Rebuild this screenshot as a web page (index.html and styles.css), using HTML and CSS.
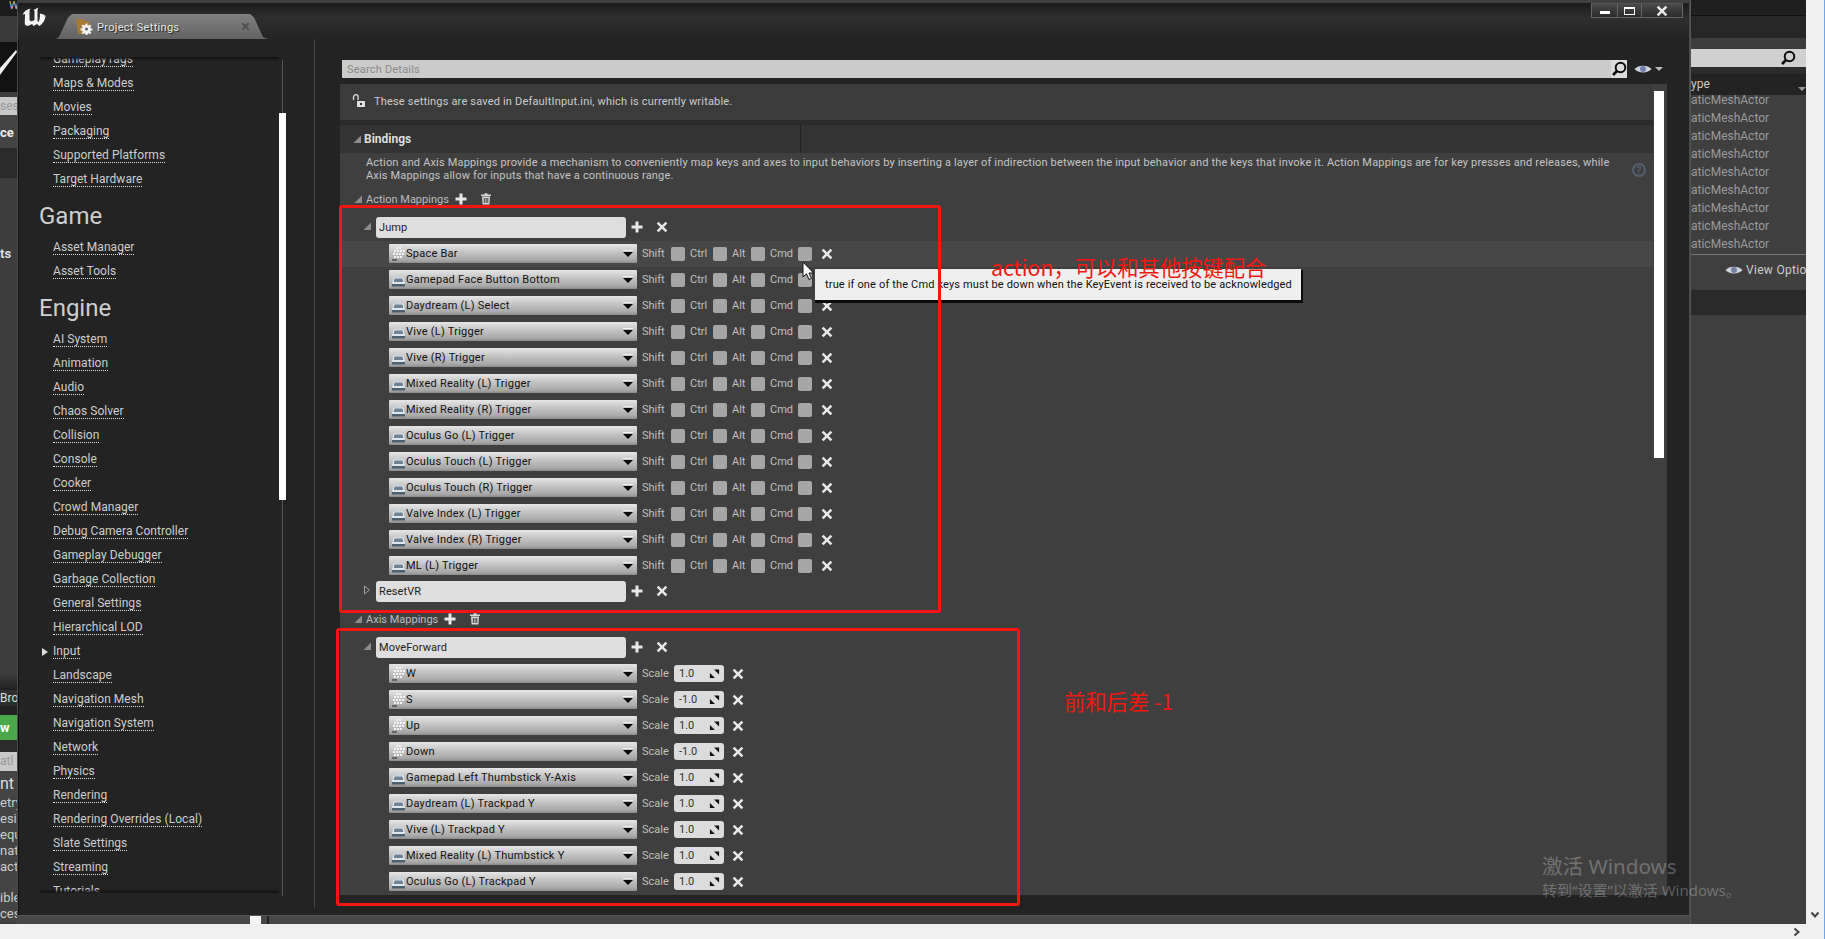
FILE: index.html
```html
<!DOCTYPE html>
<html lang="en">
<head>
<meta charset="utf-8">
<title>Project Settings</title>
<link rel="stylesheet" href="styles.css">
</head>
<body>
<svg class="sprite" width="0" height="0" aria-hidden="true">
  <defs>
    <symbol id="i-plus" viewBox="0 0 12 12"><path d="M4.500 0.500h3v4h4v3h-4v4h-3v-4h-4v-3h4z" fill="#e8e8e8"/></symbol>
    <symbol id="i-x" viewBox="0 0 12 12"><path d="M2.500 0.800L6 4.200 9.500 0.800 11.300 2.500 7.800 6l3.500 3.500-1.800 1.700L6 7.800 2.500 11.200 0.700 9.500 4.200 6 0.700 2.500z" fill="#e8e8e8"/></symbol>
    <symbol id="i-trash" viewBox="0 0 12 12"><path d="M1 1.500h10v1.500H1zM4.500 0.200h3v1.300h-3zM2 3.500h8l-.6 8H2.600zM3.800 5v5h1V5zM5.600 5v5h1V5zM7.300 5v5h1V5z" fill="#d8d8d8" fill-rule="evenodd"/></symbol>
    <symbol id="i-open" viewBox="0 0 10 10"><path d="M9 1.500V9H1.500z" fill="#8c8c8c"/></symbol>
    <symbol id="i-closed" viewBox="0 0 10 10"><path d="M2.500 1L7.500 5 2.500 9z" fill="none" stroke="#a0a0a0"/></symbol>
    <symbol id="i-kb" viewBox="0 0 15 16">
      <path d="M5 1h2v2H5zM8 1h2v2H8zM3 4h2v2H3zM6 4h2v2H6zM9 4h2v2H9zM12 4h2v2h-2zM2 7h2v2H2zM5 7h2v2H5zM8 7h2v2H8zM11 7h2v2h-2zM3 10h2v2H3zM6 10h2v2H6zM9 10h2v2H9z" fill="#f4f4f4"/>
      <path d="M1 13h5v2H1z" fill="#666"/>
    </symbol>
    <symbol id="i-pad" viewBox="0 0 15 16">
      <path d="M2.500 5.500h10L14 12H1z" fill="#dfe7ee"/>
      <path d="M3.500 6.500h8l.8 3.500H2.700z" fill="#6f8294"/>
      <path d="M1 12h13v2.500H1z" fill="#4c6070"/>
      <path d="M5 3.500h5v2H5z" fill="#c8d2da"/>
    </symbol>
    <symbol id="i-caret" viewBox="0 0 12 8"><path d="M1 0.500h10" stroke="#eee"/><path d="M1 2h10L6 7z" fill="#0a0a0a"/></symbol>
    <symbol id="i-spin" viewBox="0 0 12 12"><path d="M5.500 1.500H11V7zM1 5.500L6.500 11H1z" fill="#111"/></symbol>
    <symbol id="i-lens" viewBox="0 0 16 16"><circle cx="9.500" cy="6.500" r="4.800" fill="none" stroke="#0c0c0c" stroke-width="2"/><path d="M6 10L2 14" stroke="#0c0c0c" stroke-width="2.600"/></symbol>
    <symbol id="i-eye" viewBox="0 0 18 10"><path d="M0.500 5C4 0.500 14 0.500 17.500 5 14 9.500 4 9.500 0.500 5z" fill="#d0d4dc"/><circle cx="9" cy="5" r="3" fill="#7480a8"/></symbol>
  </defs>
</svg>

<div class="page">
  <div class="desktop">

    <aside class="strip-left">
      <div class="sl sl-w">W</div>
      <div class="sl sl-a"></div>
      <div class="sl sl-view">
        <svg class="sl-sweep" width="17" height="50" viewBox="0 0 17 50"><path d="M0 33L17 10 16 8 0 26z" fill="#f0f0f0"/></svg>
      </div>
      <div class="sl sl-b"></div>
      <div class="sl sl-search">ses</div>
      <div class="sl sl-ce">ce</div>
      <div class="sl sl-d"></div>
      <div class="sl sl-ts">ts</div>
      <div class="sl sl-e"></div>
      <div class="sl sl-f"></div>
      <div class="sl sl-bro">Bro</div>
      <div class="sl sl-g"></div>
      <div class="sl sl-green">w</div>
      <div class="sl sl-h"></div>
      <div class="sl sl-search2">atl</div>
      <div class="sl sl-nt">nt</div>
      <div class="sl sl-t">etry</div>
      <div class="sl sl-t">esid</div>
      <div class="sl sl-t">equ</div>
      <div class="sl sl-t">nati</div>
      <div class="sl sl-t">act</div>
      <div class="sl sl-gap"></div>
      <div class="sl sl-t">ible</div>
      <div class="sl sl-t">cess</div>
    </aside>

    <section class="window">
      <header class="titlebar">
        <svg class="ue-logo" width="24" height="20" viewBox="0 0 24 20"><path d="M0.500 8C1.500 4.500 4.500 2.500 8.500 1.500L7.500 3.500V12C7.500 14 9 14.500 10.500 14L12.500 13V4L11.500 3 16.500 0.500 15.500 3V14L16.500 15C17.500 13 18 11 18 8L17.800 6.500C21 7 23.500 8 23.500 9.500 23 13 21 16.500 17.500 19L15 17 11.500 19 10 17C7 19 4 19.500 3 17.500 2.500 16 3 12 3 8 3 6.500 2 6.500 0.500 8z" fill="#f4f4f4"/></svg>
        <div class="tab">
          <svg class="tab-icon" width="17" height="16" viewBox="0 0 17 16">
            <path d="M0 0h7l1 2h5l1 6-6 7H2z" fill="#a87a38"/>
            <path d="M9.500 4.500h2v1.600l1.300.5 1.200-1.100 1.400 1.400-1.100 1.200.5 1.300h1.600v2h-1.600l-.5 1.300 1.100 1.200-1.400 1.400-1.200-1.100-1.300.5v1.600h-2v-1.600l-1.300-.5-1.200 1.100-1.400-1.400 1.100-1.200-.5-1.300H4.500v-2h1.600l.5-1.300-1.100-1.200 1.400-1.400 1.200 1.100 1.300-.5z" fill="#f2f2f2"/>
            <circle cx="10.500" cy="10" r="1.500" fill="#666"/>
          </svg>
          <span class="tab-label">Project Settings</span>
          <span class="tab-close">×</span>
        </div>
        <div class="winbtns">
          <div class="winbtn winbtn-min"><span class="glyph-min"></span></div>
          <div class="winbtn winbtn-max"><span class="glyph-max"></span></div>
          <div class="winbtn winbtn-close"><svg width="12" height="12"><use href="#i-x"/></svg></div>
        </div>
      </header>

      <div class="winbody">
        <nav class="sidebar">
          <div class="nav-clip">
            <div class="nav-list">
              <div class="nav-item"><span>GameplayTags</span></div>
              <div class="nav-item"><span>Maps &amp; Modes</span></div>
              <div class="nav-item"><span>Movies</span></div>
              <div class="nav-item"><span>Packaging</span></div>
              <div class="nav-item"><span>Supported Platforms</span></div>
              <div class="nav-item"><span>Target Hardware</span></div>
              <h2 class="nav-head">Game</h2>
              <div class="nav-item"><span>Asset Manager</span></div>
              <div class="nav-item"><span>Asset Tools</span></div>
              <h2 class="nav-head">Engine</h2>
              <div class="nav-item"><span>AI System</span></div>
              <div class="nav-item"><span>Animation</span></div>
              <div class="nav-item"><span>Audio</span></div>
              <div class="nav-item"><span>Chaos Solver</span></div>
              <div class="nav-item"><span>Collision</span></div>
              <div class="nav-item"><span>Console</span></div>
              <div class="nav-item"><span>Cooker</span></div>
              <div class="nav-item"><span>Crowd Manager</span></div>
              <div class="nav-item"><span>Debug Camera Controller</span></div>
              <div class="nav-item"><span>Gameplay Debugger</span></div>
              <div class="nav-item"><span>Garbage Collection</span></div>
              <div class="nav-item"><span>General Settings</span></div>
              <div class="nav-item"><span>Hierarchical LOD</span></div>
              <div class="nav-item nav-current"><span>Input</span></div>
              <div class="nav-item"><span>Landscape</span></div>
              <div class="nav-item"><span>Navigation Mesh</span></div>
              <div class="nav-item"><span>Navigation System</span></div>
              <div class="nav-item"><span>Network</span></div>
              <div class="nav-item"><span>Physics</span></div>
              <div class="nav-item"><span>Rendering</span></div>
              <div class="nav-item"><span>Rendering Overrides (Local)</span></div>
              <div class="nav-item"><span>Slate Settings</span></div>
              <div class="nav-item"><span>Streaming</span></div>
              <div class="nav-item"><span>Tutorials</span></div>
            </div>
          </div>
          <div class="nav-scroll"><div class="nav-thumb"></div></div>
        </nav>

        <main class="details">
          <div class="searchrow">
            <div class="search"><span class="search-text">Search Details</span><span class="search-btn"><svg width="16" height="16"><use href="#i-lens"/></svg></span></div>
            <svg class="eye" width="18" height="10"><use href="#i-eye"/></svg>
            <span class="eye-caret"></span>
          </div>

          <div class="detail-wrap">
            <div class="panel">
              <div class="info">
                <svg class="lock" width="14" height="14" viewBox="0 0 14 14"><path d="M1.500 6V3a2.300 2.300 0 0 1 4.600 0v3" fill="none" stroke="#ddd" stroke-width="1.300"/><path d="M5 7h8v6H5z" fill="#ddd"/><path d="M8 9h2v2H8z" fill="#333"/></svg>
                <span>These settings are saved in DefaultInput.ini, which is currently writable.</span>
              </div>

              <div class="cat">
                <svg class="arrow" width="10" height="10"><use href="#i-open"/></svg>
                <span class="cat-name">Bindings</span>
                <span class="cat-split"></span>
              </div>

              <div class="desc">
                <p>Action and Axis Mappings provide a mechanism to conveniently map keys and axes to input behaviors by inserting a layer of indirection between the input behavior and the keys that invoke it. Action Mappings are for key presses and releases, while<br>Axis Mappings allow for inputs that have a continuous range.</p>
                <span class="help">?</span>
              </div>

              <div class="sec">
                <svg class="arrow" width="10" height="10"><use href="#i-open"/></svg>
                <span class="sec-name">Action Mappings</span>
                <svg class="sec-add" width="12" height="12"><use href="#i-plus"/></svg>
                <svg class="sec-del" width="12" height="12"><use href="#i-trash"/></svg>
              </div>

              <div class="group">
                <svg class="arrow group-arrow" width="10" height="10"><use href="#i-open"/></svg>
                <div class="name">Jump</div>
                <svg class="act act-add" width="12" height="12"><use href="#i-plus"/></svg>
                <svg class="act act-x" width="12" height="12"><use href="#i-x"/></svg>
              </div>

              <div class="row row-hover">
                <div class="sel"><svg class="ki" width="15" height="16"><use href="#i-kb"/></svg><span class="sel-text">Space Bar</span><svg class="caret" width="12" height="8"><use href="#i-caret"/></svg></div>
                <div class="mod mod-shift"><span>Shift</span><i class="box"></i></div><div class="mod mod-ctrl"><span>Ctrl</span><i class="box"></i></div><div class="mod mod-alt"><span>Alt</span><i class="box"></i></div><div class="mod mod-cmd"><span>Cmd</span><i class="box"></i></div>
                <svg class="del del-a" width="12" height="12"><use href="#i-x"/></svg>
              </div>
              <div class="row">
                <div class="sel"><svg class="ki" width="15" height="16"><use href="#i-pad"/></svg><span class="sel-text">Gamepad Face Button Bottom</span><svg class="caret" width="12" height="8"><use href="#i-caret"/></svg></div>
                <div class="mod mod-shift"><span>Shift</span><i class="box"></i></div><div class="mod mod-ctrl"><span>Ctrl</span><i class="box"></i></div><div class="mod mod-alt"><span>Alt</span><i class="box"></i></div><div class="mod mod-cmd"><span>Cmd</span><i class="box"></i></div>
                <svg class="del del-a" width="12" height="12"><use href="#i-x"/></svg>
              </div>
              <div class="row">
                <div class="sel"><svg class="ki" width="15" height="16"><use href="#i-pad"/></svg><span class="sel-text">Daydream (L) Select</span><svg class="caret" width="12" height="8"><use href="#i-caret"/></svg></div>
                <div class="mod mod-shift"><span>Shift</span><i class="box"></i></div><div class="mod mod-ctrl"><span>Ctrl</span><i class="box"></i></div><div class="mod mod-alt"><span>Alt</span><i class="box"></i></div><div class="mod mod-cmd"><span>Cmd</span><i class="box"></i></div>
                <svg class="del del-a" width="12" height="12"><use href="#i-x"/></svg>
              </div>
              <div class="row">
                <div class="sel"><svg class="ki" width="15" height="16"><use href="#i-pad"/></svg><span class="sel-text">Vive (L) Trigger</span><svg class="caret" width="12" height="8"><use href="#i-caret"/></svg></div>
                <div class="mod mod-shift"><span>Shift</span><i class="box"></i></div><div class="mod mod-ctrl"><span>Ctrl</span><i class="box"></i></div><div class="mod mod-alt"><span>Alt</span><i class="box"></i></div><div class="mod mod-cmd"><span>Cmd</span><i class="box"></i></div>
                <svg class="del del-a" width="12" height="12"><use href="#i-x"/></svg>
              </div>
              <div class="row">
                <div class="sel"><svg class="ki" width="15" height="16"><use href="#i-pad"/></svg><span class="sel-text">Vive (R) Trigger</span><svg class="caret" width="12" height="8"><use href="#i-caret"/></svg></div>
                <div class="mod mod-shift"><span>Shift</span><i class="box"></i></div><div class="mod mod-ctrl"><span>Ctrl</span><i class="box"></i></div><div class="mod mod-alt"><span>Alt</span><i class="box"></i></div><div class="mod mod-cmd"><span>Cmd</span><i class="box"></i></div>
                <svg class="del del-a" width="12" height="12"><use href="#i-x"/></svg>
              </div>
              <div class="row">
                <div class="sel"><svg class="ki" width="15" height="16"><use href="#i-pad"/></svg><span class="sel-text">Mixed Reality (L) Trigger</span><svg class="caret" width="12" height="8"><use href="#i-caret"/></svg></div>
                <div class="mod mod-shift"><span>Shift</span><i class="box"></i></div><div class="mod mod-ctrl"><span>Ctrl</span><i class="box"></i></div><div class="mod mod-alt"><span>Alt</span><i class="box"></i></div><div class="mod mod-cmd"><span>Cmd</span><i class="box"></i></div>
                <svg class="del del-a" width="12" height="12"><use href="#i-x"/></svg>
              </div>
              <div class="row">
                <div class="sel"><svg class="ki" width="15" height="16"><use href="#i-pad"/></svg><span class="sel-text">Mixed Reality (R) Trigger</span><svg class="caret" width="12" height="8"><use href="#i-caret"/></svg></div>
                <div class="mod mod-shift"><span>Shift</span><i class="box"></i></div><div class="mod mod-ctrl"><span>Ctrl</span><i class="box"></i></div><div class="mod mod-alt"><span>Alt</span><i class="box"></i></div><div class="mod mod-cmd"><span>Cmd</span><i class="box"></i></div>
                <svg class="del del-a" width="12" height="12"><use href="#i-x"/></svg>
              </div>
              <div class="row">
                <div class="sel"><svg class="ki" width="15" height="16"><use href="#i-pad"/></svg><span class="sel-text">Oculus Go (L) Trigger</span><svg class="caret" width="12" height="8"><use href="#i-caret"/></svg></div>
                <div class="mod mod-shift"><span>Shift</span><i class="box"></i></div><div class="mod mod-ctrl"><span>Ctrl</span><i class="box"></i></div><div class="mod mod-alt"><span>Alt</span><i class="box"></i></div><div class="mod mod-cmd"><span>Cmd</span><i class="box"></i></div>
                <svg class="del del-a" width="12" height="12"><use href="#i-x"/></svg>
              </div>
              <div class="row">
                <div class="sel"><svg class="ki" width="15" height="16"><use href="#i-pad"/></svg><span class="sel-text">Oculus Touch (L) Trigger</span><svg class="caret" width="12" height="8"><use href="#i-caret"/></svg></div>
                <div class="mod mod-shift"><span>Shift</span><i class="box"></i></div><div class="mod mod-ctrl"><span>Ctrl</span><i class="box"></i></div><div class="mod mod-alt"><span>Alt</span><i class="box"></i></div><div class="mod mod-cmd"><span>Cmd</span><i class="box"></i></div>
                <svg class="del del-a" width="12" height="12"><use href="#i-x"/></svg>
              </div>
              <div class="row">
                <div class="sel"><svg class="ki" width="15" height="16"><use href="#i-pad"/></svg><span class="sel-text">Oculus Touch (R) Trigger</span><svg class="caret" width="12" height="8"><use href="#i-caret"/></svg></div>
                <div class="mod mod-shift"><span>Shift</span><i class="box"></i></div><div class="mod mod-ctrl"><span>Ctrl</span><i class="box"></i></div><div class="mod mod-alt"><span>Alt</span><i class="box"></i></div><div class="mod mod-cmd"><span>Cmd</span><i class="box"></i></div>
                <svg class="del del-a" width="12" height="12"><use href="#i-x"/></svg>
              </div>
              <div class="row">
                <div class="sel"><svg class="ki" width="15" height="16"><use href="#i-pad"/></svg><span class="sel-text">Valve Index (L) Trigger</span><svg class="caret" width="12" height="8"><use href="#i-caret"/></svg></div>
                <div class="mod mod-shift"><span>Shift</span><i class="box"></i></div><div class="mod mod-ctrl"><span>Ctrl</span><i class="box"></i></div><div class="mod mod-alt"><span>Alt</span><i class="box"></i></div><div class="mod mod-cmd"><span>Cmd</span><i class="box"></i></div>
                <svg class="del del-a" width="12" height="12"><use href="#i-x"/></svg>
              </div>
              <div class="row">
                <div class="sel"><svg class="ki" width="15" height="16"><use href="#i-pad"/></svg><span class="sel-text">Valve Index (R) Trigger</span><svg class="caret" width="12" height="8"><use href="#i-caret"/></svg></div>
                <div class="mod mod-shift"><span>Shift</span><i class="box"></i></div><div class="mod mod-ctrl"><span>Ctrl</span><i class="box"></i></div><div class="mod mod-alt"><span>Alt</span><i class="box"></i></div><div class="mod mod-cmd"><span>Cmd</span><i class="box"></i></div>
                <svg class="del del-a" width="12" height="12"><use href="#i-x"/></svg>
              </div>
              <div class="row">
                <div class="sel"><svg class="ki" width="15" height="16"><use href="#i-pad"/></svg><span class="sel-text">ML (L) Trigger</span><svg class="caret" width="12" height="8"><use href="#i-caret"/></svg></div>
                <div class="mod mod-shift"><span>Shift</span><i class="box"></i></div><div class="mod mod-ctrl"><span>Ctrl</span><i class="box"></i></div><div class="mod mod-alt"><span>Alt</span><i class="box"></i></div><div class="mod mod-cmd"><span>Cmd</span><i class="box"></i></div>
                <svg class="del del-a" width="12" height="12"><use href="#i-x"/></svg>
              </div>

              <div class="group group-next">
                <svg class="arrow group-arrow" width="10" height="10"><use href="#i-closed"/></svg>
                <div class="name">ResetVR</div>
                <svg class="act act-add" width="12" height="12"><use href="#i-plus"/></svg>
                <svg class="act act-x" width="12" height="12"><use href="#i-x"/></svg>
              </div>

              <div class="sec sec-next">
                <svg class="arrow" width="10" height="10"><use href="#i-open"/></svg>
                <span class="sec-name">Axis Mappings</span>
                <svg class="sec-add" width="12" height="12"><use href="#i-plus"/></svg>
                <svg class="sec-del" width="12" height="12"><use href="#i-trash"/></svg>
              </div>

              <div class="group">
                <svg class="arrow group-arrow" width="10" height="10"><use href="#i-open"/></svg>
                <div class="name">MoveForward</div>
                <svg class="act act-add" width="12" height="12"><use href="#i-plus"/></svg>
                <svg class="act act-x" width="12" height="12"><use href="#i-x"/></svg>
              </div>

              <div class="row">
                <div class="sel"><svg class="ki" width="15" height="16"><use href="#i-kb"/></svg><span class="sel-text">W</span><svg class="caret" width="12" height="8"><use href="#i-caret"/></svg></div>
                <span class="scale-l">Scale</span><div class="scale"><span>1.0</span><svg width="11" height="11"><use href="#i-spin"/></svg></div>
                <svg class="del del-s" width="12" height="12"><use href="#i-x"/></svg>
              </div>
              <div class="row">
                <div class="sel"><svg class="ki" width="15" height="16"><use href="#i-kb"/></svg><span class="sel-text">S</span><svg class="caret" width="12" height="8"><use href="#i-caret"/></svg></div>
                <span class="scale-l">Scale</span><div class="scale"><span>-1.0</span><svg width="11" height="11"><use href="#i-spin"/></svg></div>
                <svg class="del del-s" width="12" height="12"><use href="#i-x"/></svg>
              </div>
              <div class="row">
                <div class="sel"><svg class="ki" width="15" height="16"><use href="#i-kb"/></svg><span class="sel-text">Up</span><svg class="caret" width="12" height="8"><use href="#i-caret"/></svg></div>
                <span class="scale-l">Scale</span><div class="scale"><span>1.0</span><svg width="11" height="11"><use href="#i-spin"/></svg></div>
                <svg class="del del-s" width="12" height="12"><use href="#i-x"/></svg>
              </div>
              <div class="row">
                <div class="sel"><svg class="ki" width="15" height="16"><use href="#i-kb"/></svg><span class="sel-text">Down</span><svg class="caret" width="12" height="8"><use href="#i-caret"/></svg></div>
                <span class="scale-l">Scale</span><div class="scale"><span>-1.0</span><svg width="11" height="11"><use href="#i-spin"/></svg></div>
                <svg class="del del-s" width="12" height="12"><use href="#i-x"/></svg>
              </div>
              <div class="row">
                <div class="sel"><svg class="ki" width="15" height="16"><use href="#i-pad"/></svg><span class="sel-text">Gamepad Left Thumbstick Y-Axis</span><svg class="caret" width="12" height="8"><use href="#i-caret"/></svg></div>
                <span class="scale-l">Scale</span><div class="scale"><span>1.0</span><svg width="11" height="11"><use href="#i-spin"/></svg></div>
                <svg class="del del-s" width="12" height="12"><use href="#i-x"/></svg>
              </div>
              <div class="row">
                <div class="sel"><svg class="ki" width="15" height="16"><use href="#i-pad"/></svg><span class="sel-text">Daydream (L) Trackpad Y</span><svg class="caret" width="12" height="8"><use href="#i-caret"/></svg></div>
                <span class="scale-l">Scale</span><div class="scale"><span>1.0</span><svg width="11" height="11"><use href="#i-spin"/></svg></div>
                <svg class="del del-s" width="12" height="12"><use href="#i-x"/></svg>
              </div>
              <div class="row">
                <div class="sel"><svg class="ki" width="15" height="16"><use href="#i-pad"/></svg><span class="sel-text">Vive (L) Trackpad Y</span><svg class="caret" width="12" height="8"><use href="#i-caret"/></svg></div>
                <span class="scale-l">Scale</span><div class="scale"><span>1.0</span><svg width="11" height="11"><use href="#i-spin"/></svg></div>
                <svg class="del del-s" width="12" height="12"><use href="#i-x"/></svg>
              </div>
              <div class="row">
                <div class="sel"><svg class="ki" width="15" height="16"><use href="#i-pad"/></svg><span class="sel-text">Mixed Reality (L) Thumbstick Y</span><svg class="caret" width="12" height="8"><use href="#i-caret"/></svg></div>
                <span class="scale-l">Scale</span><div class="scale"><span>1.0</span><svg width="11" height="11"><use href="#i-spin"/></svg></div>
                <svg class="del del-s" width="12" height="12"><use href="#i-x"/></svg>
              </div>
              <div class="row">
                <div class="sel"><svg class="ki" width="15" height="16"><use href="#i-pad"/></svg><span class="sel-text">Oculus Go (L) Trackpad Y</span><svg class="caret" width="12" height="8"><use href="#i-caret"/></svg></div>
                <span class="scale-l">Scale</span><div class="scale"><span>1.0</span><svg width="11" height="11"><use href="#i-spin"/></svg></div>
                <svg class="del del-s" width="12" height="12"><use href="#i-x"/></svg>
              </div>
            </div>
            <div class="detail-scroll"><div class="detail-thumb"></div></div>
          </div>
        </main>
      </div>
    </section>

    <aside class="strip-right">
      <div class="sr sr-top"></div>
      <div class="sr sr-mid"></div>
      <div class="sr sr-band"></div>
      <div class="sr sr-search"><svg width="16" height="16"><use href="#i-lens"/></svg></div>
      <div class="sr sr-gap"></div>
      <div class="sr sr-head"><span>ype</span><span class="sr-sort"></span></div>
      <div class="sr-rows">
        <div class="sr-row">aticMeshActor</div>
        <div class="sr-row">aticMeshActor</div>
        <div class="sr-row">aticMeshActor</div>
        <div class="sr-row">aticMeshActor</div>
        <div class="sr-row">aticMeshActor</div>
        <div class="sr-row">aticMeshActor</div>
        <div class="sr-row">aticMeshActor</div>
        <div class="sr-row">aticMeshActor</div>
        <div class="sr-row">aticMeshActor</div>
      </div>
      <div class="sr sr-view"><svg class="sr-eye" width="18" height="10"><use href="#i-eye"/></svg><span>View Options</span></div>
      <div class="sr sr-dark"></div>
      <div class="sr sr-rest"></div>
    </aside>

    <div class="bottombar"><span class="bb-thumb"></span><span class="bb-line"></span></div>

    <div class="tooltip">true if one of the Cmd keys must be down when the KeyEvent is received to be acknowledged</div>
    <svg class="cursor" width="13" height="20" viewBox="0 0 13 20"><path d="M1 1V16L4.500 12.800 7 18.500 9.500 17.500 7 12H11.500z" fill="#fff" stroke="#111"/></svg>

    <div class="mark mark-action"></div>
    <div class="mark mark-axis"></div>
    <div class="note note-action">action，可以和其他按键配合</div>
    <div class="note note-axis">前和后差 -1</div>

    <div class="watermark">
      <div class="wm-title">激活 Windows</div>
      <div class="wm-sub">转到“设置”以激活 Windows。</div>
    </div>
  </div>

  <div class="vbar"><svg width="10" height="8" viewBox="0 0 10 8"><path d="M1.500 1.500L5 5.500 8.500 1.500" fill="none" stroke="#444" stroke-width="2"/></svg></div>
  <div class="hbar"><svg width="8" height="10" viewBox="0 0 8 10"><path d="M1.500 1.500L5.500 5 1.500 8.500" fill="none" stroke="#444" stroke-width="2"/></svg></div>
</div>
</body>
</html>
```

FILE: styles.css
```css
* { box-sizing: border-box; }
html, body { margin: 0; padding: 0; background: #f0f0f0; }
body { width: 1825px; height: 939px; overflow: hidden; font-family: Roboto, "Liberation Sans", "Noto Sans CJK SC", sans-serif; font-size: 11px; color: #ccc; }
.sprite { position: absolute; }

.page { display: grid; grid-template-columns: 1806px 19px; grid-template-rows: 924px 15px; width: 1825px; height: 939px; }
.desktop { position: relative; display: grid; grid-template-columns: 17px 1673px 116px; grid-template-rows: 916px 8px; background: #3f3f3f; overflow: hidden; }
.vbar { display: flex; align-items: flex-end; justify-content: center; padding-bottom: 5px; border-right: 1px solid #6ea4e4; background: #f0f0f0; }
.hbar { grid-column: 1 / 3; display: flex; justify-content: flex-end; align-items: center; padding-right: 23px; border-right: 1px solid #6ea4e4; background: #f0f0f0; }

/* left strip of the editor behind the window */
.strip-left { grid-row: 1 / 3; display: flex; flex-direction: column; overflow: hidden; background: #3f3f3f; color: #ddd; font-size: 12px; }
.sl { flex: none; white-space: nowrap; overflow: hidden; }
.sl-w { height: 16px; background: #1b1b1b; padding-left: 9px; line-height: 12px; font-size: 11px; color: #bbb; }
.sl-a { height: 26px; background: #383838; }
.sl-view { height: 50px; background: #111; }
.sl-sweep { display: block; }
.sl-b { height: 5px; background: #3c3c3c; }
.sl-search { height: 18px; background: #c8c8c8; color: #999; line-height: 18px; text-align: right; }
.sl-ce { height: 33px; background: #444; font-weight: 700; font-size: 13px; line-height: 36px; color: #eee; }
.sl-d { height: 30px; background: #2b2b2b; }
.sl-ts { height: 84px; background: #3d3d3d; padding-top: 66px; line-height: 19px; font-weight: 700; font-size: 13px; color: #ddd; }
.sl-e { height: 413px; background: #3d3d3d; }
.sl-f { height: 15px; background: linear-gradient(#3a3a3a, #1e1e1e); }
.sl-bro { height: 16px; background: #2f2f2f; line-height: 16px; }
.sl-g { height: 9px; background: #222; }
.sl-green { height: 25px; background: #4aa84a; color: #fff; font-weight: 700; font-size: 13px; line-height: 25px; }
.sl-h { height: 12px; background: #2b2b2b; }
.sl-search2 { height: 19px; background: #c8c8c8; color: #999; line-height: 19px; }
.sl-nt { height: 24px; background: #444; color: #ddd; font-size: 16px; line-height: 26px; }
.sl-t { height: 16px; line-height: 16px; background: #444; color: #ccc; font-size: 13px; }
.sl-gap { height: 15px; background: #444; }

/* settings window */
.window { grid-column: 2; grid-row: 1; margin-top: 3px; display: flex; flex-direction: column; background: #232323; border-left: 1px solid #4a4a4a; border-right: 1px solid #4a4a4a; border-bottom: 1px solid #555; box-shadow: inset 1px 0 0 #111; }
.titlebar { flex: none; position: relative; display: flex; height: 36px; background: linear-gradient(#1a1a1a, #2e2e2e 40%, #232323); }
.ue-logo { flex: none; margin: 4px 0 0 4px; }
.tab { flex: none; display: flex; align-items: center; width: 212px; height: 25px; margin: 11px 0 0 10px; padding: 1px 0 0 20px; background: linear-gradient(#808080, #636363); clip-path: polygon(0 100%, 3px 92%, 12px 14%, 16px 0, 194px 0, 198px 14%, 207px 92%, 212px 100%); }
.tab-icon { flex: none; }
.tab-label { margin-left: 4px; color: #e6e6e6; font-size: 11px; letter-spacing: .3px; text-shadow: 1px 1px 1px #222; }
.tab-close { margin-left: 62px; color: #4f4f4f; font-size: 16px; font-weight: 700; line-height: 1; }
.winbtns { position: absolute; right: 6px; top: 0; display: flex; height: 15px; border: 1px solid #666; border-top-color: #555; background: linear-gradient(#4a4a4a, #2a2a2a); }
.winbtn { display: flex; align-items: center; justify-content: center; height: 100%; border-right: 1px solid #666; }
.winbtn-min { width: 26px; }
.winbtn-max { width: 24px; }
.winbtn-close { width: 40px; border-right: 0; }
.glyph-min { width: 10px; height: 3px; margin-top: 3px; background: #fff; }
.glyph-max { width: 11px; height: 8px; border: 1px solid #fff; border-top-width: 2px; }

.winbody { flex: 1; min-height: 0; display: flex; }

/* sidebar */
.sidebar { flex: none; display: flex; width: 297px; border-right: 1px solid #444; padding-top: 18px; height: 869px; }
.nav-clip { position: relative; flex: none; width: 261px; height: 836px; overflow: hidden; }
.nav-clip::before, .nav-clip::after { content: ""; position: absolute; left: 22px; right: 0; height: 4px; z-index: 1; }
.nav-clip::before { top: 0; background: linear-gradient(#111, rgba(17,17,17,0)); }
.nav-clip::after { bottom: 0; background: linear-gradient(rgba(17,17,17,0), #111); }
.nav-list { margin-top: -9px; padding-left: 35px; }
.nav-item { position: relative; height: 24px; line-height: 23px; font-size: 12px; letter-spacing: .05px; color: #cdcdcd; white-space: nowrap; }
.nav-item span { display: inline-block; line-height: 14px; border-bottom: 1px dotted #ddd; vertical-align: middle; }
.nav-current::before { content: ""; position: absolute; left: -11px; top: 8px; border-left: 6px solid #ddd; border-top: 4px solid transparent; border-bottom: 4px solid transparent; }
.nav-head { margin: 0 0 0 -14px; height: 44px; padding-top: 10px; line-height: 28px; font-size: 24px; font-weight: 400; color: #cfcfcf; }
.nav-scroll { flex: none; width: 7px; height: 836px; padding-top: 53px; background: linear-gradient(#555, #555) center / 1px 100% no-repeat; margin-top: 3px; }
.nav-thumb { width: 7px; height: 387px; background: #fff; }

/* details */
.details { flex: none; display: flex; flex-direction: column; width: 1327px; margin-left: 25px; padding-top: 21px; }
.searchrow { flex: none; display: flex; align-items: center; height: 18px; margin-left: 2px; }
.search { display: flex; justify-content: space-between; align-items: center; width: 1285px; height: 18px; background: #cbcbcb; padding-left: 5px; }
.search-text { color: #8a8a8a; font-size: 11px; letter-spacing: .2px; }
.search-btn { display: flex; align-items: center; justify-content: center; width: 16px; height: 18px; background: #dcdcdc; }
.eye { margin-left: 7px; flex: none; }
.eye-caret { margin-left: 3px; border-top: 4px solid #bbb; border-left: 4px solid transparent; border-right: 4px solid transparent; }

.detail-wrap { flex: none; display: flex; margin-top: 6px; height: 811px; }
.panel { flex: none; width: 1313px; height: 811px; overflow: hidden; background: #3f3f3f; }
.detail-scroll { flex: none; width: 14px; padding: 7px 3px 0 1px; background: #3f3f3f; }
.detail-thumb { width: 10px; height: 367px; background: #fff; }

.info { display: flex; align-items: center; height: 36px; padding: 0 0 2px 12px; background: #3b3b3b; color: #ccc; letter-spacing: .18px; box-shadow: 0 5px 0 #2a2a2a; }
.lock { margin-right: 8px; flex: none; }
.cat { position: relative; display: flex; align-items: center; height: 28px; margin-top: 5px; padding-left: 12px; background: #333; }
.cat-name { margin-left: 2px; font-size: 12px; font-weight: 700; color: #ddd; }
.cat-split { position: absolute; left: 460px; top: 0; bottom: 0; width: 1px; background: #222; }
.arrow { flex: none; }
.desc { display: flex; justify-content: space-between; padding: 3px 0 3px 26px; height: 33px; background: #3f3f3f; }
.desc p { margin: 0; line-height: 13px; color: #c4c4c4; font-size: 11px; letter-spacing: .17px; white-space: nowrap; }
.help { flex: none; display: flex; align-items: center; justify-content: center; width: 14px; height: 14px; margin: 7px 7px 0 0; border-radius: 50%; border: 2px solid #556070; color: #556070; font-size: 10px; font-weight: 700; }

.sec { display: flex; align-items: center; height: 26px; margin-bottom: 4px; padding-left: 13px; }
.sec-next { margin-top: 1px; }
.sec-name { margin-left: 3px; color: #bdbdbd; font-size: 11px; }
.sec-add { margin-left: 6px; }
.sec-del { margin-left: 13px; }

.group { display: flex; align-items: flex-start; height: 25px; padding: 1px 0 0 22px; }
.group-next { margin-top: 1px; }
.group-arrow { margin: 4px 4px 0 0; }
.name { width: 250px; height: 21px; line-height: 21px; padding-left: 3px; border-radius: 3px; background: #dedede; color: #222; font-size: 11px; letter-spacing: .1px; }
.act { margin-top: 4px; }
.act-add { margin-left: 5px; }
.act-x { margin-left: 13px; }

.row { display: flex; align-items: center; height: 26px; padding: 0 0 1px 49px; }
.row-hover { background: #474747; }
.sel { flex: none; display: flex; align-items: center; width: 248px; height: 19px; padding: 0 3px 0 2px; border-radius: 1px; background: linear-gradient(#e6e6e6, #c6c6c6 40%, #a8a8a8 85%, #8c8c8c); color: #111; font-size: 11px; letter-spacing: .25px; }
.ki { flex: none; }
.sel-text { flex: 1; white-space: nowrap; }
.caret { flex: none; }
.mod { flex: none; display: flex; align-items: center; justify-content: space-between; margin-left: 5px; color: #c0c0c0; font-size: 11px; }
.mod-shift { width: 43px; }
.mod-ctrl { width: 37px; }
.mod-alt { width: 33px; }
.mod-cmd { width: 42px; }
.box { width: 14px; height: 14px; border-radius: 2px; background: #a6a6a6; }
.del { flex: none; }
.del-a { margin-left: 9px; }
.del-s { margin-left: 8px; }
.scale-l { flex: none; width: 32px; margin-left: 5px; color: #c0c0c0; font-size: 11px; }
.scale { flex: none; display: flex; align-items: center; justify-content: space-between; width: 50px; height: 17px; padding: 0 4px 0 5px; border-radius: 3px; background: #dcdcdc; color: #333; font-size: 11px; }

/* right strip of the editor behind the window */
.strip-right { grid-column: 3; grid-row: 1 / 3; display: flex; flex-direction: column; overflow: hidden; background: #3f3f3f; border-left: 1px solid #555; color: #ccc; font-size: 12px; }
.sr { flex: none; }
.sr-top { height: 16px; background: #1f1f1f; border-bottom: 1px solid #111; }
.sr-mid { height: 22px; background: #262626; }
.sr-band { height: 11px; background: #3c3c3c; }
.sr-search { display: flex; align-items: center; justify-content: flex-end; padding-right: 10px; height: 18px; background: #d0d0d0; }
.sr-gap { height: 7px; background: #2c2c2c; }
.sr-head { position: relative; height: 21px; line-height: 20px; background: #232323; color: #ccc; white-space: nowrap; }
.sr-sort { position: absolute; right: 0; top: 13px; border-top: 4px solid #999; border-left: 4px solid transparent; border-right: 4px solid transparent; }
.sr-rows { flex: none; height: 160px; background: #3f3f3f; border-bottom: 1px solid #777; }
.sr-row { height: 18px; line-height: 11px; color: #9a9a9a; white-space: nowrap; }
.sr-view { display: flex; align-items: center; gap: 3px; height: 35px; padding: 0 0 5px 34px; white-space: nowrap; color: #ccc; letter-spacing: .3px; overflow: hidden; }
.sr-eye { flex: none; }
.sr-dark { height: 25px; background: #2a2a2a; }
.sr-rest { flex: 1; background: #3f3f3f; }

.bottombar { grid-column: 2; grid-row: 2; display: flex; background: #474747; padding-left: 233px; }
.bb-thumb { width: 11px; background: #f4f4f4; }
.bb-line { width: 2px; margin-left: 6px; background: #222; }

/* overlays */
.tooltip { position: absolute; left: 815px; top: 269px; width: 486px; height: 31px; padding-left: 10px; line-height: 32px; background: #efefef; color: #111; font-size: 11px; letter-spacing: .155px; white-space: nowrap; box-shadow: 1px 2px 0 1px #0c0c0c; }
.cursor { position: absolute; left: 802px; top: 261px; }
.mark { position: absolute; border: 3px solid #f5170f; border-radius: 3px; }
.mark-action { left: 339px; top: 205px; width: 602px; height: 408px; }
.mark-axis { left: 336px; top: 628px; width: 684px; height: 278px; }
.note { position: absolute; color: #f5170f; font-family: "Noto Sans CJK SC", sans-serif; font-size: 21.3px; white-space: nowrap; }
.note-action { left: 991px; top: 253px; line-height: 28px; }
.note-axis { left: 1064px; top: 687px; line-height: 28px; }
.watermark { position: absolute; left: 1542px; top: 853px; color: rgba(255,255,255,0.27); font-family: "Noto Sans", "Noto Sans CJK SC", sans-serif; }
.wm-title { font-size: 20.6px; line-height: 26px; }
.wm-sub { font-size: 15px; line-height: 20px; margin-top: 1px; }
```
